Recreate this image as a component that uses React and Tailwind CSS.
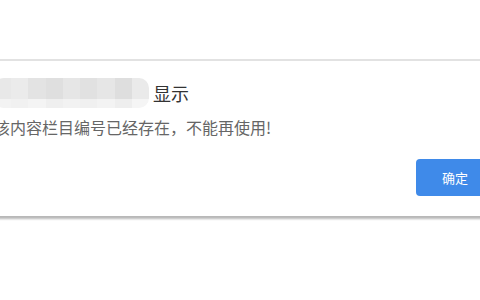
import React from 'react'

const TOP = ['#e8e8e8', '#ebebeb', '#e3e3e3', '#dfdfdf', '#e6e6e6', '#e1e1e1', '#e6e6e6', '#dedede', '#eaeaea']
const BOTTOM = ['#f3f3f3', '#f1f1f1', '#f4f4f4', '#efefef', '#f2f2f2', '#f0f0f0', '#f3f3f3', '#eeeeee', '#f5f5f5']

function Mosaic() {
  return (
    <div className="w-[155px] h-[30px] rounded-[10px] overflow-hidden flex flex-col">
      <div className="flex h-[21px]">
        {TOP.map((c, i) => (
          <div key={i} className="flex-1" style={{ background: c }} />
        ))}
      </div>
      <div className="flex flex-1">
        {BOTTOM.map((c, i) => (
          <div key={i} className="flex-1" style={{ background: c }} />
        ))}
      </div>
    </div>
  )
}

export default function App() {
  return (
    <div className="w-[480px] h-[300px] bg-white overflow-hidden pt-[59px] font-['Noto_Sans_CJK_SC',sans-serif]">
      <div className="-ml-[30px] w-[544px] bg-white border-t-2 border-[#e2e2e2] shadow-[0_3px_2px_rgba(0,0,0,0.28)] pl-[24px] pr-[20px] pb-[20px]">
        {/* title */}
        <div className="flex items-center gap-[4px] mt-[17px]">
          <Mosaic />
          <span className="text-[18px] leading-[30px] text-[#333]">显示</span>
        </div>

        {/* message */}
        <p className="mt-[7px] text-[16px] leading-[24px] text-[#666]">该内容栏目编号已经存在，不能再使用!</p>

        {/* actions */}
        <div className="flex justify-end mt-[20px]">
          <button className="w-[78px] h-[37px] rounded-[4px] bg-[#3f8ae9] text-white text-[13px]">确定</button>
        </div>
      </div>
    </div>
  )
}
